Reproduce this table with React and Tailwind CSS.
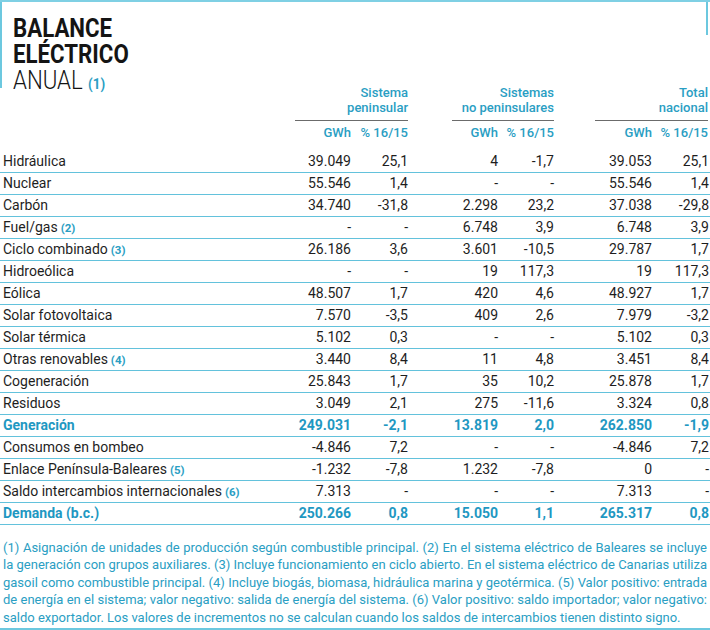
import React from 'react';

const rows = [
  ['Hidráulica', null, '39.049', '25,1', '4', '-1,7', '39.053', '25,1'],
  ['Nuclear', null, '55.546', '1,4', '-', '-', '55.546', '1,4'],
  ['Carbón', null, '34.740', '-31,8', '2.298', '23,2', '37.038', '-29,8'],
  ['Fuel/gas', '(2)', '-', '-', '6.748', '3,9', '6.748', '3,9'],
  ['Ciclo combinado', '(3)', '26.186', '3,6', '3.601', '-10,5', '29.787', '1,7'],
  ['Hidroeólica', null, '-', '-', '19', '117,3', '19', '117,3'],
  ['Eólica', null, '48.507', '1,7', '420', '4,6', '48.927', '1,7'],
  ['Solar fotovoltaica', null, '7.570', '-3,5', '409', '2,6', '7.979', '-3,2'],
  ['Solar térmica', null, '5.102', '0,3', '-', '-', '5.102', '0,3'],
  ['Otras renovables', '(4)', '3.440', '8,4', '11', '4,8', '3.451', '8,4'],
  ['Cogeneración', null, '25.843', '1,7', '35', '10,2', '25.878', '1,7'],
  ['Residuos', null, '3.049', '2,1', '275', '-11,6', '3.324', '0,8'],
  ['Generación', null, '249.031', '-2,1', '13.819', '2,0', '262.850', '-1,9', true],
  ['Consumos en bombeo', null, '-4.846', '7,2', '-', '-', '-4.846', '7,2'],
  ['Enlace Península-Baleares', '(5)', '-1.232', '-7,8', '1.232', '-7,8', '0', '-'],
  ['Saldo intercambios internacionales', '(6)', '7.313', '-', '-', '-', '7.313', '-'],
  ['Demanda (b.c.)', null, '250.266', '0,8', '15.050', '1,1', '265.317', '0,8', true],
];

const notes = [
  '(1) Asignación de unidades de producción según combustible principal. (2) En el sistema eléctrico de Baleares se incluye',
  'la generación con grupos auxiliares. (3) Incluye funcionamiento en ciclo abierto. En el sistema eléctrico de Canarias utiliza',
  'gasoil como combustible principal. (4) Incluye biogás, biomasa, hidráulica marina y geotérmica. (5) Valor positivo: entrada',
  'de energía en el sistema; valor negativo: salida de energía del sistema. (6) Valor positivo: saldo importador; valor negativo:',
];

const cols = 'grid grid-cols-[1fr_61px_57px_90px_56px_98px_58px]';

const GroupHead = ({ pad, top, bottom }) => (
  <div className={`col-span-2 ${pad}`}>
    <div className="border-b border-[#6b6b6b] pb-[5px] text-right leading-[14.5px]">
      <div>{top}</div>
      <div>{bottom}</div>
    </div>
  </div>
);

export default function App() {
  return (
    <div className="w-[710px] h-[630px] bg-white font-['Roboto',sans-serif] overflow-hidden">
      {/* cabecera */}
      <div className="flex border-t-2 border-[#7fd0e4] h-[150px]">
        <div className="w-[290px]">
          <div className="h-[86px] border-l-2 border-[#6cc8df] pl-[11px] pt-[14px] text-[25px] leading-[26px] text-[#141414]">
            <div className="scale-x-[0.89] origin-left">
              <div className="font-bold">BALANCE</div>
              <div className="font-bold">ELÉCTRICO</div>
              <div className="font-light flex items-baseline">
                ANUAL
                <span className="ml-[6px] text-[15px] font-bold text-[#2a9ec3]">(1)</span>
              </div>
            </div>
          </div>
        </div>
        <div className="flex-1 flex flex-col">
          <div className="h-[33px] border-r-2 border-[#6cc8df] mr-[2px]" />
          <div className="grid grid-cols-[61px_57px_90px_56px_98px_58px] mt-[51px] text-[13px] font-medium text-[#2a9ec3]">
            <GroupHead pad="pl-[5px]" top="Sistema" bottom="peninsular" />
            <GroupHead pad="pl-[44px]" top="Sistemas" bottom="no peninsulares" />
            <GroupHead pad="pl-[41px] pr-[2px]" top="Total" bottom="nacional" />
            <div className="text-right pt-[4px] leading-[16px]">GWh</div>
            <div className="text-right pt-[4px] leading-[16px]">% 16/15</div>
            <div className="text-right pt-[4px] leading-[16px]">GWh</div>
            <div className="text-right pt-[4px] leading-[16px]">% 16/15</div>
            <div className="text-right pt-[4px] leading-[16px]">GWh</div>
            <div className="text-right pt-[4px] leading-[16px] pr-[2px]">% 16/15</div>
          </div>
        </div>
      </div>

      {/* tabla */}
      <div className="text-[14px] pt-[1px]">
        {rows.map((r) => {
          const bold = r[8];
          return (
            <div
              key={r[0]}
              className={`${cols} h-[22px] items-center border-b border-[#63c2dc] ${bold ? 'font-bold text-[#1f98c2]' : 'text-[#1e1e1e]'}`}
            >
              <div className="pl-[3px] flex items-baseline whitespace-nowrap">
                {r[0]}
                {r[1] && <span className="ml-[3px] text-[11.5px] font-bold text-[#2a9ec3]">{r[1]}</span>}
              </div>
              <div className="text-right">{r[2]}</div>
              <div className="text-right">{r[3]}</div>
              <div className="text-right">{r[4]}</div>
              <div className="text-right">{r[5]}</div>
              <div className="text-right">{r[6]}</div>
              <div className="text-right pr-[1px]">{r[7]}</div>
            </div>
          );
        })}
      </div>

      {/* notas */}
      <div className="pt-[14px] pb-[2px] px-[3px] text-[13px] leading-[17.4px] text-[#2a9ec3] border-b-2 border-[#6cc8df]">
        {notes.map((n) => (
          <div key={n} className="whitespace-nowrap text-justify [text-align-last:justify]">{n}</div>
        ))}
        <div className="whitespace-nowrap">
          saldo exportador. Los valores de incrementos no se calculan cuando los saldos de intercambios tienen distinto signo.
        </div>
      </div>
    </div>
  );
}
